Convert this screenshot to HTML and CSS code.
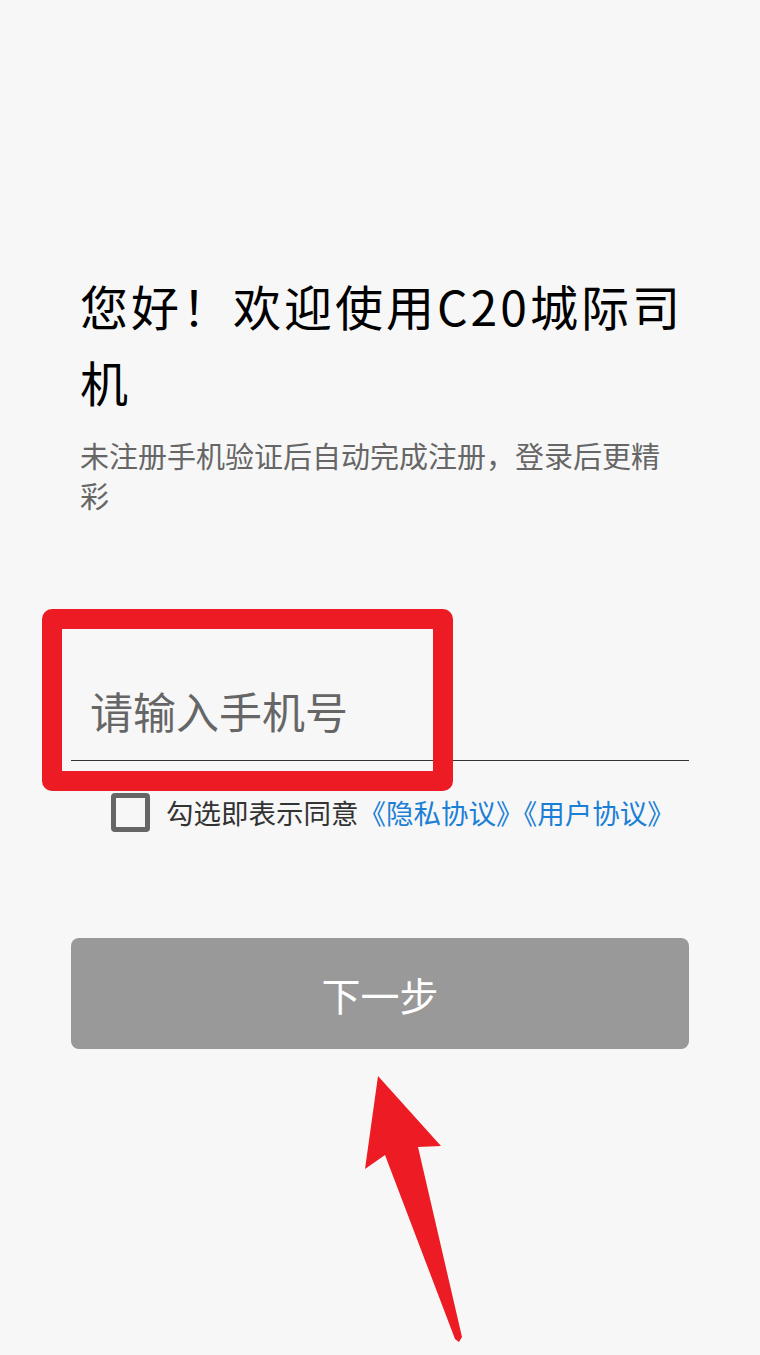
FILE: index.html
```html
<!DOCTYPE html>
<html lang="zh-CN">
<head>
<meta charset="utf-8">
<title>登录</title>
<link rel="stylesheet" href="styles.css">
</head>
<body>
<div class="page">
  <div class="intro">
    <h1 class="title">您好！欢迎使用C20城际司机</h1>
    <p class="subtitle">未注册手机验证后自动完成注册，登录后更精彩</p>
  </div>
  <div class="phone-field">
    <span class="placeholder">请输入手机号</span>
  </div>
  <div class="agree-row">
    <span class="checkbox"></span>
    <span class="agree-text">勾选即表示同意<a class="link">《隐私协议》</a><a class="link">《用户协议》</a></span>
  </div>
  <div class="next-btn">下一步</div>
</div>
<div class="highlight-box"></div>
<svg class="arrow" width="760" height="1355" viewBox="0 0 760 1355">
  <polygon points="378,1076 441,1146 418,1147 462,1337 459,1342 455,1339 385,1155 365,1169" fill="#ed1c24"/>
</svg>
</body>
</html>
```
FILE: styles.css
```css
html, body {
  margin: 0;
  padding: 0;
  background: #f7f7f7;
}
body {
  width: 760px;
  height: 1355px;
  position: relative;
  overflow: hidden;
  font-family: "Noto Sans CJK SC", "Noto Sans", sans-serif;
}
.page {
  padding: 267px 71px 0 71px;
  display: flex;
  flex-direction: column;
}
.intro {
  padding: 0 0 0 9px;
}
.title {
  margin: 0;
  font-size: 48px;
  font-weight: 400;
  line-height: 76px;
  color: #000;
  letter-spacing: 3px;
}
.subtitle {
  margin: 16px 9px 0 0;
  font-size: 29px;
  line-height: 40px;
  color: #666;
}
.phone-field {
  margin-top: 144px;
  height: 99px;
  border-bottom: 1px solid #333;
  display: flex;
  align-items: center;
  padding-left: 19px;
  padding-top: 2px;
  box-sizing: content-box;
}
.placeholder {
  font-size: 43px;
  color: #666;
  line-height: 1;
}
.agree-row {
  margin-top: 32px;
  padding-left: 40px;
  display: flex;
  align-items: center;
  gap: 16px;
}
.checkbox {
  width: 29px;
  height: 29px;
  border: 5px solid #666;
  border-radius: 4px;
  flex: none;
}
.agree-text {
  font-size: 27.5px;
  color: #333;
  line-height: 39px;
}
.link {
  color: #1c7fd6;
}
.next-btn {
  margin-top: 106px;
  height: 111px;
  border-radius: 8px;
  background: #999;
  color: #fff;
  font-size: 39px;
  display: flex;
  align-items: center;
  justify-content: center;
}
.highlight-box {
  position: absolute;
  left: 42px;
  top: 609px;
  width: 371px;
  height: 142px;
  border: 20px solid #ed1c24;
  border-radius: 10px;
}
.arrow {
  position: absolute;
  left: 0;
  top: 0;
  pointer-events: none;
}
```
